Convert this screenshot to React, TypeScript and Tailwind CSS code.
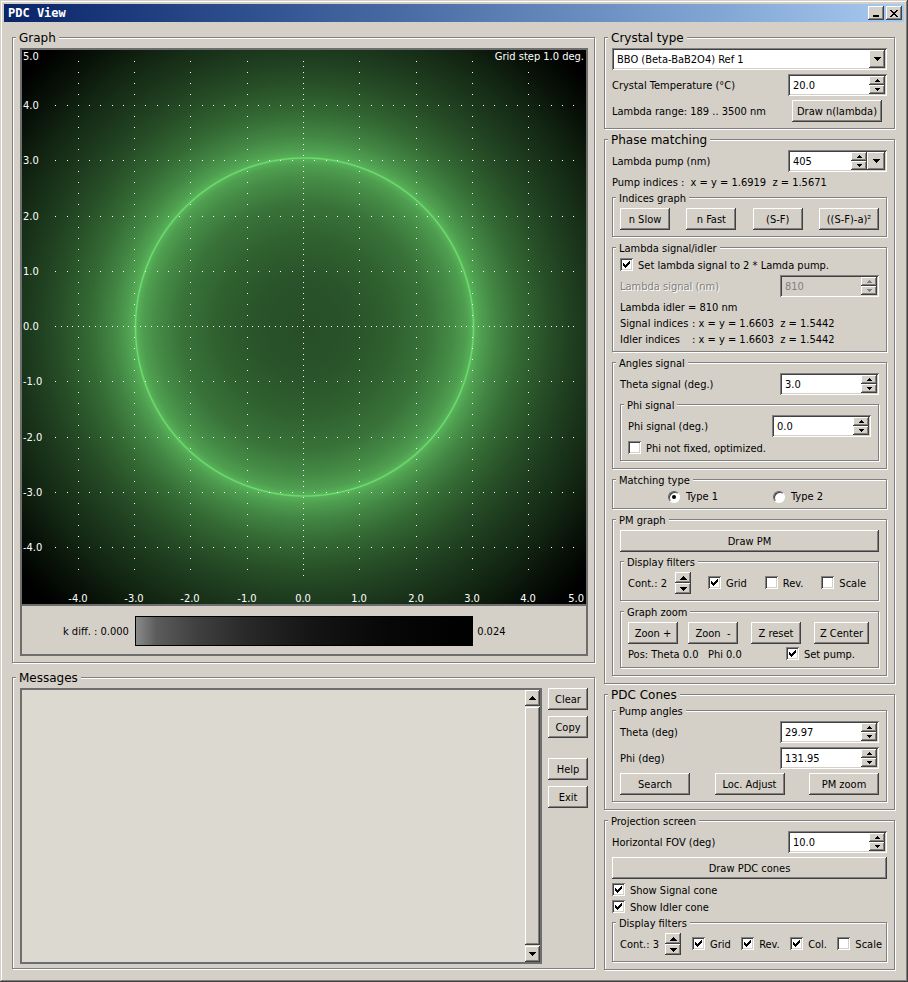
import React, { useId } from "react";

const raised =
  "bg-[#d4d0c8] shadow-[inset_-1px_-1px_#404040,inset_1px_1px_#ffffff,inset_-2px_-2px_#808080]";
const sunken =
  "shadow-[inset_1px_1px_#808080,inset_-1px_-1px_#ffffff,inset_2px_2px_#404040,inset_-2px_-2px_#d4d0c8]";

type Kids = { children?: React.ReactNode };

function Group({ title, big, className = "px-[7px]", children }: Kids & { title: string; big?: boolean; className?: string }) {
  return (
    <fieldset className={`min-w-0 border border-[#808080] shadow-[1px_1px_#ffffff,inset_1px_1px_#ffffff] ${className}`}>
      <legend
        className={`-ml-1 h-[15px] bg-[#d4d0c8] px-[3px] leading-[17px] whitespace-pre ${
          big ? "font-['DejaVu_Sans'] text-[12px]" : ""
        }`}
      >
        {title}
      </legend>
      {children}
    </fieldset>
  );
}

function Btn({ children, className = "" }: Kids & { className?: string }) {
  return (
    <button type="button" className={`h-[22px] text-center whitespace-pre ${raised} ${className}`}>
      {children}
    </button>
  );
}

function Arrow({ up, big }: { up?: boolean; big?: boolean }) {
  const d = big
    ? up ? "M4 0h1v1h1v1h1v1h1v1h-7v-1h1v-1h1v-1h1z" : "M1 0h7v1h-1v1h-1v1h-1v1h-1v-1h-1v-1h-1v-1h-1z"
    : up ? "M4 0h1v1h1v1h1v1h-5v-1h1v-1h1z" : "M2 0h5v1h-1v1h-1v1h-1v-1h-1v-1h-1z";
  return (
    <svg width="9" height={big ? 4 : 3} viewBox={`0 0 9 ${big ? 4 : 3}`} fill="currentColor" shapeRendering="crispEdges" aria-hidden="true">
      <path d={d} />
    </svg>
  );
}

function Stepper({ tall, disabled }: { tall?: boolean; disabled?: boolean }) {
  const b = `flex w-4 items-center justify-center disabled:text-[#808080] ${raised} ${tall ? "h-[11px]" : "h-[9px]"}`;
  return (
    <span className="flex shrink-0 flex-col">
      <button type="button" aria-label="Increase" disabled={disabled} className={b}><Arrow up big={tall} /></button>
      <button type="button" aria-label="Decrease" disabled={disabled} className={b}><Arrow big={tall} /></button>
    </span>
  );
}

function Field({ label, value, disabled, drop }: { label: string; value: string; disabled?: boolean; drop?: boolean }) {
  const id = useId();
  return (
    <div className="flex items-center justify-between">
      <label htmlFor={id} className={disabled ? "text-[#808080] [text-shadow:1px_1px_#ffffff]" : ""}>{label}</label>
      <span className={`flex h-[22px] w-[99px] p-[2px] ${sunken} ${disabled ? "bg-[#d4d0c8]" : "bg-white"}`}>
        <input id={id} defaultValue={value} disabled={disabled} className="min-w-0 flex-1 bg-transparent pt-px pl-[3px] outline-none disabled:text-[#808080]" />
        <Stepper disabled={disabled} />
        {drop && (
          <button type="button" aria-label="Show wavelengths" className={`flex w-[18px] shrink-0 items-center justify-center ${raised}`}><Arrow big /></button>
        )}
      </span>
    </div>
  );
}

function Check({ label, on }: { label: string; on?: boolean }) {
  return (
    <label className="flex h-[14px] items-center gap-[5px]">
      <span className="mb-px grid size-[13px]">
        <input type="checkbox" defaultChecked={on} className={`peer col-start-1 row-start-1 size-[13px] appearance-none bg-white ${sunken}`} />
        <svg className="pointer-events-none col-start-1 row-start-1 opacity-0 peer-checked:opacity-100" width="13" height="13" viewBox="0 0 13 13" shapeRendering="crispEdges" aria-hidden="true">
          <path d="M3 5h1v1h1v1h1v-1h1v-1h1v-1h1v-1h1v3h-1v1h-1v1h-1v1h-1v1h-1v-1h-1v-1h-1z" />
        </svg>
      </span>
      {label}
    </label>
  );
}

function Radio({ label, on }: { label: string; on?: boolean }) {
  return (
    <label className="flex h-[13px] items-center gap-[6px]">
      <span className="grid size-3 place-items-center">
        <input
          type="radio"
          name="matching"
          defaultChecked={on}
          className="peer col-start-1 row-start-1 size-3 appearance-none rounded-full border border-t-[#606060] border-r-white border-b-white border-l-[#606060] bg-white shadow-[inset_1px_1px_#404040]"
        />
        <span className="pointer-events-none col-start-1 row-start-1 size-1 rounded-full bg-black opacity-0 peer-checked:opacity-100" />
      </span>
      {label}
    </label>
  );
}

const W = 564;
const H = 554;
const X0 = 281;
const Y0 = 276;
const STEP_X = 56.3;
const STEP_Y = 55.25;

function range(a: number, b: number) {
  return Array.from({ length: b - a + 1 }, (_, i) => a + i);
}

function gridPath() {
  const dot = (x: number, y: number) => `M${Math.round(x)} ${Math.round(y)}h1v1h-1z`;
  const out: string[] = [];
  for (const i of range(-4, 4)) {
    for (const k of range(-24, 22)) out.push(dot(X0 + i * STEP_X, Y0 + (k * STEP_Y) / 5));
    for (const k of range(-22, 24)) out.push(dot(X0 + (k * STEP_X) / 5, Y0 - i * STEP_Y));
  }
  for (const k of range(-48, 45)) out.push(dot(X0, Y0 + (k * STEP_Y) / 10));
  for (const k of range(-44, 48)) out.push(dot(X0 + (k * STEP_X) / 10, Y0));
  return out.join("");
}

function Plot() {
  return (
    <svg viewBox={`0 0 ${W} ${H}`} className="block w-full bg-black text-[11px]" role="img" aria-label="Phase matching graph">
      <defs>
        <radialGradient id="glow" gradientUnits="userSpaceOnUse" cx="282.5" cy="277" r="400">
          <stop offset="0" stopColor="#274d27" />
          <stop offset="0.12" stopColor="#29532a" />
          <stop offset="0.22" stopColor="#2f602f" />
          <stop offset="0.31" stopColor="#397339" />
          <stop offset="0.37" stopColor="#458b46" />
          <stop offset="0.405" stopColor="#4f9f50" />
          <stop offset="0.419" stopColor="#57b058" />
          <stop offset="0.4225" stopColor="#6fe070" />
          <stop offset="0.426" stopColor="#57b058" />
          <stop offset="0.442" stopColor="#4f9f50" />
          <stop offset="0.48" stopColor="#428543" />
          <stop offset="0.54" stopColor="#336833" />
          <stop offset="0.62" stopColor="#264c26" />
          <stop offset="0.7" stopColor="#1b371c" />
          <stop offset="0.78" stopColor="#122512" />
          <stop offset="0.86" stopColor="#081108" />
          <stop offset="0.94" stopColor="#000000" />
        </radialGradient>
      </defs>
      <rect width={W} height={H} fill="url(#glow)" />
      <path d={gridPath()} fill="#ffffff" shapeRendering="crispEdges" />
      <g fill="#ffffff">
        {range(-4, 5).map((v) => (
          <text key={`y${v}`} x="1" y={v === 5 ? 10 : Math.round(Y0 - v * STEP_Y) + 4}>{v.toFixed(1)}</text>
        ))}
        {range(-4, 5).map((v) => (
          <text key={`x${v}`} x={v === 5 ? 562 : Math.round(X0 + v * STEP_X)} y="552" textAnchor={v === 5 ? "end" : "middle"}>{v.toFixed(1)}</text>
        ))}
        <text x="562" y="10" textAnchor="end">Grid step 1.0 deg.</text>
      </g>
    </svg>
  );
}

export default function App() {
  return (
    <div className="flex min-h-screen flex-col bg-[#d4d0c8] p-1 pb-3 font-['DejaVu_Sans_Condensed','DejaVu_Sans',sans-serif] text-[11px] leading-[15px] text-black shadow-[inset_-1px_-1px_#404040,inset_1px_1px_#d4d0c8,inset_-2px_-2px_#808080,inset_2px_2px_#ffffff]">
      <header className="flex h-[18px] items-center bg-linear-to-r from-[#0a246a] to-[#a6caf0] pr-[2px] pl-1">
        <h1 className="flex-1 font-['DejaVu_Sans_Mono',monospace] text-[12px] font-bold text-white">PDC View</h1>
        <div className="flex gap-[2px]">
          <button type="button" aria-label="Minimize" className={`flex h-[14px] w-4 items-end justify-center pb-[3px] ${raised}`}>
            <span className="h-[2px] w-[6px] bg-black" />
          </button>
          <button type="button" aria-label="Close" className={`flex h-[14px] w-4 items-center justify-center ${raised}`}>
            <svg width="8" height="7" viewBox="0 0 8 7" shapeRendering="crispEdges" aria-hidden="true">
              <path d="M0 0h2v1h1v1h2v-1h1v-1h2v1h-1v1h-1v1h-1v1h1v1h1v1h1v1h-2v-1h-1v-1h-2v1h-1v1h-2v-1h1v-1h1v-1h1v-1h-1v-1h-1v-1h-1z" />
            </svg>
          </button>
        </div>
      </header>

      <main className="flex flex-1 gap-[9px] pt-2 pr-[9px] pl-2">
        <div className="flex min-w-0 flex-1 flex-col gap-[7px] pb-px">
          <Group title="Graph" big className="pt-[3px] pr-[6px] pb-[6px] pl-[7px]">
            <div className="border-2 border-[#6e6e6e]">
              <Plot />
              <div className="flex h-[50px] items-center border-t-2 border-[#6e6e6e] pt-[2px]">
                <span className="w-1/5 pr-[6px] text-right">k diff. : 0.000</span>
                <span className="h-[30px] w-3/5 border border-black bg-[linear-gradient(to_right,#8a8a8a,#5c5c5c_6%,#404040_18%,#2a2a2a_32%,#151515_52%,#070707_75%,#000000)]" />
                <span className="pl-1">0.024</span>
              </div>
            </div>
          </Group>

          <Group title="Messages" big className="flex-1 pt-[3px] pr-[6px] pb-[4px] pl-[7px]">
            <div className="flex h-full gap-[6px]">
              <div className="flex min-w-0 flex-1 border-2 border-[#6e6e6e] bg-[#dcd9d1]">
                <textarea aria-label="Messages" className="min-w-0 flex-1 resize-none outline-none" />
                <div className="flex w-[15px] flex-col gap-[1px]">
                  <button type="button" aria-label="Scroll up" className={`flex h-4 items-center justify-center ${raised}`}><Arrow up big /></button>
                  <div className={`flex-1 ${raised}`} />
                  <button type="button" aria-label="Scroll down" className={`flex h-4 items-center justify-center ${raised}`}><Arrow big /></button>
                </div>
              </div>
              <div className="flex w-10 flex-col gap-[6px]">
                <Btn>Clear</Btn>
                <Btn>Copy</Btn>
                <Btn className="mt-[14px]">Help</Btn>
                <Btn>Exit</Btn>
              </div>
            </div>
          </Group>
        </div>

        <div className="flex w-[291px] shrink-0 flex-col gap-[3px]">
          <Group title="Crystal type" big className="px-[7px] pt-[3px] pb-[6px]">
            <div className="flex flex-col gap-1">
              <div className={`grid h-[22px] bg-white p-[2px] ${sunken}`}>
                <select aria-label="Crystal" className="col-start-1 row-start-1 appearance-none bg-transparent pt-px pl-[3px] outline-none">
                  <option>BBO (Beta-BaB2O4) Ref 1</option>
                </select>
                <span className={`pointer-events-none col-start-1 row-start-1 flex w-4 items-center justify-center justify-self-end ${raised}`}><Arrow big /></span>
              </div>
              <Field label="Crystal Temperature (°C)" value="20.0" />
              <div className="flex items-center justify-between pr-[5px]">
                <span>Lambda range: 189 .. 3500 nm</span>
                <Btn className="w-[90px]">Draw n(lambda)</Btn>
              </div>
            </div>
          </Group>

          <Group title="Phase matching" big className="px-[7px] pt-[3px] pb-[7px]">
            <Field label="Lambda pump (nm)" value="405" drop />
            <p className="mt-[3px] whitespace-pre">Pump indices :  x = y = 1.6919  z = 1.5671</p>
            <div className="flex flex-col gap-[3px]">
              <Group title="Indices graph" className="px-[7px] pt-[3px] pb-[6px]">
                <div className="flex justify-between">
                  <Btn className="w-[50px]">n Slow</Btn>
                  <Btn className="w-[50px]">n Fast</Btn>
                  <Btn className="w-[50px]">(S-F)</Btn>
                  <Btn className="w-[60px]">((S-F)-a)²</Btn>
                </div>
              </Group>

              <Group title="Lambda signal/idler" className="px-[7px] pt-[3px] pb-[3px]">
                <div className="flex flex-col gap-[3px]">
                  <Check label="Set lambda signal to 2 * Lamda pump." on />
                  <Field label="Lambda signal (nm)" value="810" disabled />
                </div>
                <div className="mt-[3px] leading-4 whitespace-pre">
                  <p>Lambda idler = 810 nm</p>
                  <p className="flex"><span className="w-[72px]">Signal indices</span>: x = y = 1.6603  z = 1.5442</p>
                  <p className="flex"><span className="w-[72px]">Idler indices</span>: x = y = 1.6603  z = 1.5442</p>
                </div>
              </Group>

              <Group title="Angles signal" className="px-[7px] pt-[3px] pb-[7px]">
                <div className="flex flex-col gap-[2px]">
                  <Field label="Theta signal (deg.)" value="3.0" />
                  <Group title="Phi signal" className="px-[7px] pt-[3px] pb-[5px]">
                    <div className="flex flex-col gap-1">
                      <Field label="Phi signal (deg.)" value="0.0" />
                      <Check label="Phi not fixed, optimized." />
                    </div>
                  </Group>
                </div>
              </Group>

              <Group title="Matching type" className="px-[7px] pt-[3px] pb-[5px]">
                <div className="flex gap-[55px] pl-12">
                  <Radio label="Type 1" on />
                  <Radio label="Type 2" />
                </div>
              </Group>

              <Group title="PM graph" className="px-[7px] pt-[3px] pb-[7px]">
                <Btn className="block w-full">Draw PM</Btn>
                <div className="mt-[2px] flex flex-col gap-[3px]">
                  <Group title="Display filters" className="px-[7px] pt-[3px] pb-[6px]">
                    <div className="flex items-center">
                      <span className="w-[47px]">Cont.: 2</span>
                      <Stepper tall />
                      <div className="flex flex-1 justify-between pr-[5px] pl-[17px]">
                        <Check label="Grid" on />
                        <Check label="Rev." />
                        <Check label="Scale" />
                      </div>
                    </div>
                  </Group>
                  <Group title="Graph zoom" className="px-[7px] pt-[3px] pb-[5px]">
                    <div className="flex justify-between pr-[2px]">
                      <div className="flex gap-[10px]">
                        <Btn className="w-[50px]">Zoon +</Btn>
                        <Btn className="w-[50px]">Zoon  -</Btn>
                      </div>
                      <Btn className="w-[50px]">Z reset</Btn>
                      <Btn className="w-[55px]">Z Center</Btn>
                    </div>
                    <div className="mt-[2px] flex h-4 items-center justify-between pr-4 whitespace-pre">
                      <span>Pos: Theta 0.0   Phi 0.0</span>
                      <Check label="Set pump." on />
                    </div>
                  </Group>
                </div>
              </Group>
            </div>
          </Group>

          <Group title="PDC Cones" big className="px-[7px] pt-px pb-[7px]">
            <Group title="Pump angles" className="px-[7px] pt-[3px] pb-[6px]">
              <div className="flex flex-col gap-1">
                <Field label="Theta (deg)" value="29.97" />
                <Field label="Phi (deg)" value="131.95" />
                <div className="flex justify-between">
                  <Btn className="w-[70px]">Search</Btn>
                  <Btn className="w-[70px]">Loc. Adjust</Btn>
                  <Btn className="w-[70px]">PM zoom</Btn>
                </div>
              </div>
            </Group>
          </Group>

          <Group title="Projection screen" className="px-[7px] pt-[3px] pb-[7px]">
            <div className="flex flex-col gap-1">
              <Field label="Horizontal FOV (deg)" value="10.0" />
              <Btn>Draw PDC cones</Btn>
            </div>
            <div className="mt-1 flex flex-col gap-[3px]">
              <Check label="Show Signal cone" on />
              <Check label="Show Idler cone" on />
            </div>
            <Group title="Display filters" className="mt-px pt-[3px] pr-1 pb-[6px] pl-[7px]">
              <div className="flex items-center">
                <span className="w-[45px]">Cont.: 3</span>
                <Stepper tall />
                <div className="flex flex-1 justify-between pl-[11px]">
                  <Check label="Grid" on />
                  <Check label="Rev." on />
                  <Check label="Col." on />
                  <Check label="Scale" />
                </div>
              </div>
            </Group>
          </Group>
        </div>
      </main>
    </div>
  );
}
